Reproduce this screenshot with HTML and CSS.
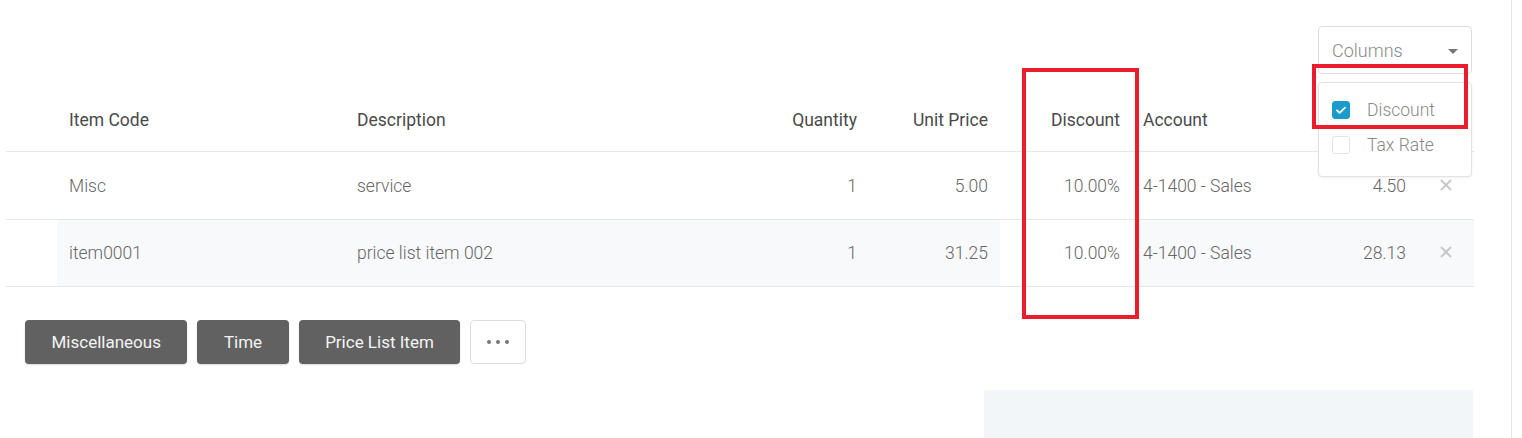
FILE: index.html
```html
<!DOCTYPE html>
<html>
<head>
<meta charset="utf-8">
<link rel="stylesheet" href="styles.css">
</head>
<body>
<div class="page">
  <div class="main">
    <div class="toolbar">
      <div class="col-picker">
        <div class="select"><span>Columns</span><span class="caret"></span></div>
        <div class="menu">
          <div class="menu-item"><span class="check on"><svg viewBox="0 0 18 18" width="18" height="18"><path d="M5 9.3l2.6 2.6L13 6.6" fill="none" stroke="#fff" stroke-width="1.8" stroke-linecap="round" stroke-linejoin="round"/></svg></span><span>Discount</span></div>
          <div class="menu-item"><span class="check"></span><span>Tax Rate</span></div>
        </div>
      </div>
    </div>
    <div class="table">
      <div class="row head">
        <div class="c"></div>
        <div class="c l">Item Code</div>
        <div class="c l">Description</div>
        <div class="c r">Quantity</div>
        <div class="c r">Unit Price</div>
        <div class="c r disc">Discount</div>
        <div class="c l acc">Account</div>
        <div class="c r"></div>
        <div class="c"></div>
      </div>
      <div class="row">
        <div class="c"></div>
        <div class="c l">Misc</div>
        <div class="c l">service</div>
        <div class="c r">1</div>
        <div class="c r">5.00</div>
        <div class="c r disc">10.00%</div>
        <div class="c l acc">4-1400 - Sales</div>
        <div class="c r">4.50</div>
        <div class="c x"><svg viewBox="0 0 12 12" width="12" height="12"><path d="M1.5 1.5l9 9M10.5 1.5l-9 9" stroke="#c8c8c8" stroke-width="2" stroke-linecap="round"/></svg></div>
      </div>
      <div class="row alt">
        <div class="c blank"></div>
        <div class="c l">item0001</div>
        <div class="c l">price list item 002</div>
        <div class="c r">1</div>
        <div class="c r">31.25</div>
        <div class="c r disc">10.00%</div>
        <div class="c l acc">4-1400 - Sales</div>
        <div class="c r">28.13</div>
        <div class="c x"><svg viewBox="0 0 12 12" width="12" height="12"><path d="M1.5 1.5l9 9M10.5 1.5l-9 9" stroke="#c8c8c8" stroke-width="2" stroke-linecap="round"/></svg></div>
      </div>
    </div>
    <div class="actions">
      <button class="btn">Miscellaneous</button>
      <button class="btn">Time</button>
      <button class="btn">Price List Item</button>
      <button class="btn more"><span></span><span></span><span></span></button>
    </div>
    <div class="summary"></div>
  </div>
</div>
<div class="mark mark-discount"></div>
<div class="mark mark-menu"></div>
</body>
</html>
```
FILE: styles.css
```css
* { box-sizing: border-box; }
html, body { margin: 0; padding: 0; background: #fff; }
body {
  font-family: Roboto, "Liberation Sans", Arial, sans-serif;
  font-size: 17.5px;
  color: #4a4a4a;
  width: 1522px;
  height: 438px;
  overflow: hidden;
  position: relative;
}
.page { display: flex; height: 438px; }
.main {
  width: 1512px;
  border-right: 1px solid #e4e4e4;
  height: 438px;
}
.toolbar {
  display: flex;
  justify-content: flex-end;
  padding: 26px 39px 0 0;
  margin-bottom: 13px;
}
.col-picker { position: relative; width: 154px; }
.select {
  height: 48px;
  border: 1px solid #ddd;
  border-radius: 4px;
  display: flex;
  align-items: center;
  justify-content: space-between;
  padding: 0 13px 0 13px;
  color: #888;
  font-size: 18px;
  font-weight: 300;
}
.caret {
  width: 0; height: 0;
  border-left: 5px solid transparent;
  border-right: 5px solid transparent;
  border-top: 5px solid #777;
  margin-top: 2px;
}
.menu {
  position: absolute;
  top: 56px;
  left: 0;
  width: 154px;
  height: 95px;
  background: #fff;
  border: 1px solid #e2e2e2;
  border-radius: 4px;
  box-shadow: 0 1px 3px rgba(0,0,0,0.06);
  padding-top: 9px;
  z-index: 5;
}
.menu-item {
  height: 35px;
  display: flex;
  align-items: center;
  padding-left: 13px;
  gap: 17px;
  color: #888;
  font-weight: 300;
}
.check {
  width: 18px; height: 18px;
  border: 1px solid #e0e4e8;
  border-radius: 3px;
  display: flex;
}
.check.on { background: #1a9bcb; border-color: #1a9bcb; }
.check svg { margin: -1px; }

.table { margin-left: 6px; width: 1468px; }
.row {
  display: grid;
  grid-template-columns: 51px 288px 375px 149px 131px 138px 162px 118px 56px;
  height: 68px;
  border-bottom: 1px solid #e6e7e9;
}
.row.alt { height: 67px; }
.row.head { height: 65px; color: #4a4a4a; }
.row:not(.head) { color: #666; font-weight: 300; }
.c { display: flex; align-items: center; }
.c.l { padding-left: 12px; }
.c.r { justify-content: flex-end; padding-right: 12px; }
.c.disc { padding-right: 18px; }
.c.acc { padding-left: 5px; }
.row.head .c { padding-top: 1px; }
.row.alt .c { background: #f8f9fb; }
.row.alt .c.blank, .row.alt .c.disc { background: #fff; }
.c.x { justify-content: center; padding-left: 0; padding-bottom: 2px; }

.actions {
  display: flex;
  gap: 10px;
  margin: 33px 0 0 25px;
}
.btn {
  height: 44px;
  border: none;
  border-radius: 4px;
  background: #616161;
  color: #f4f4f4;
  font-family: Roboto, "Liberation Sans", Arial, sans-serif;
  font-size: 17px;
  padding: 0 26.5px;
  box-shadow: 0 1px 2px rgba(0,0,0,0.15);
}
.btn.more {
  width: 56px;
  background: #fff;
  border: 1px solid #dcdcdc;
  box-shadow: none;
  display: flex;
  align-items: center;
  justify-content: center;
  gap: 5px;
  padding: 0;
}
.btn.more span {
  width: 4px; height: 4px; border-radius: 50%; background: #777;
}
.summary {
  margin: 26px 0 0 984px;
  width: 489px;
  height: 60px;
  background: #f3f6f9;
}
.mark {
  position: absolute;
  border: 4px solid #e91d2b;
  z-index: 10;
}
.mark-discount { left: 1022px; top: 68px; width: 117px; height: 251px; }
.mark-menu { left: 1312px; top: 64px; width: 156px; height: 65px; }
```
